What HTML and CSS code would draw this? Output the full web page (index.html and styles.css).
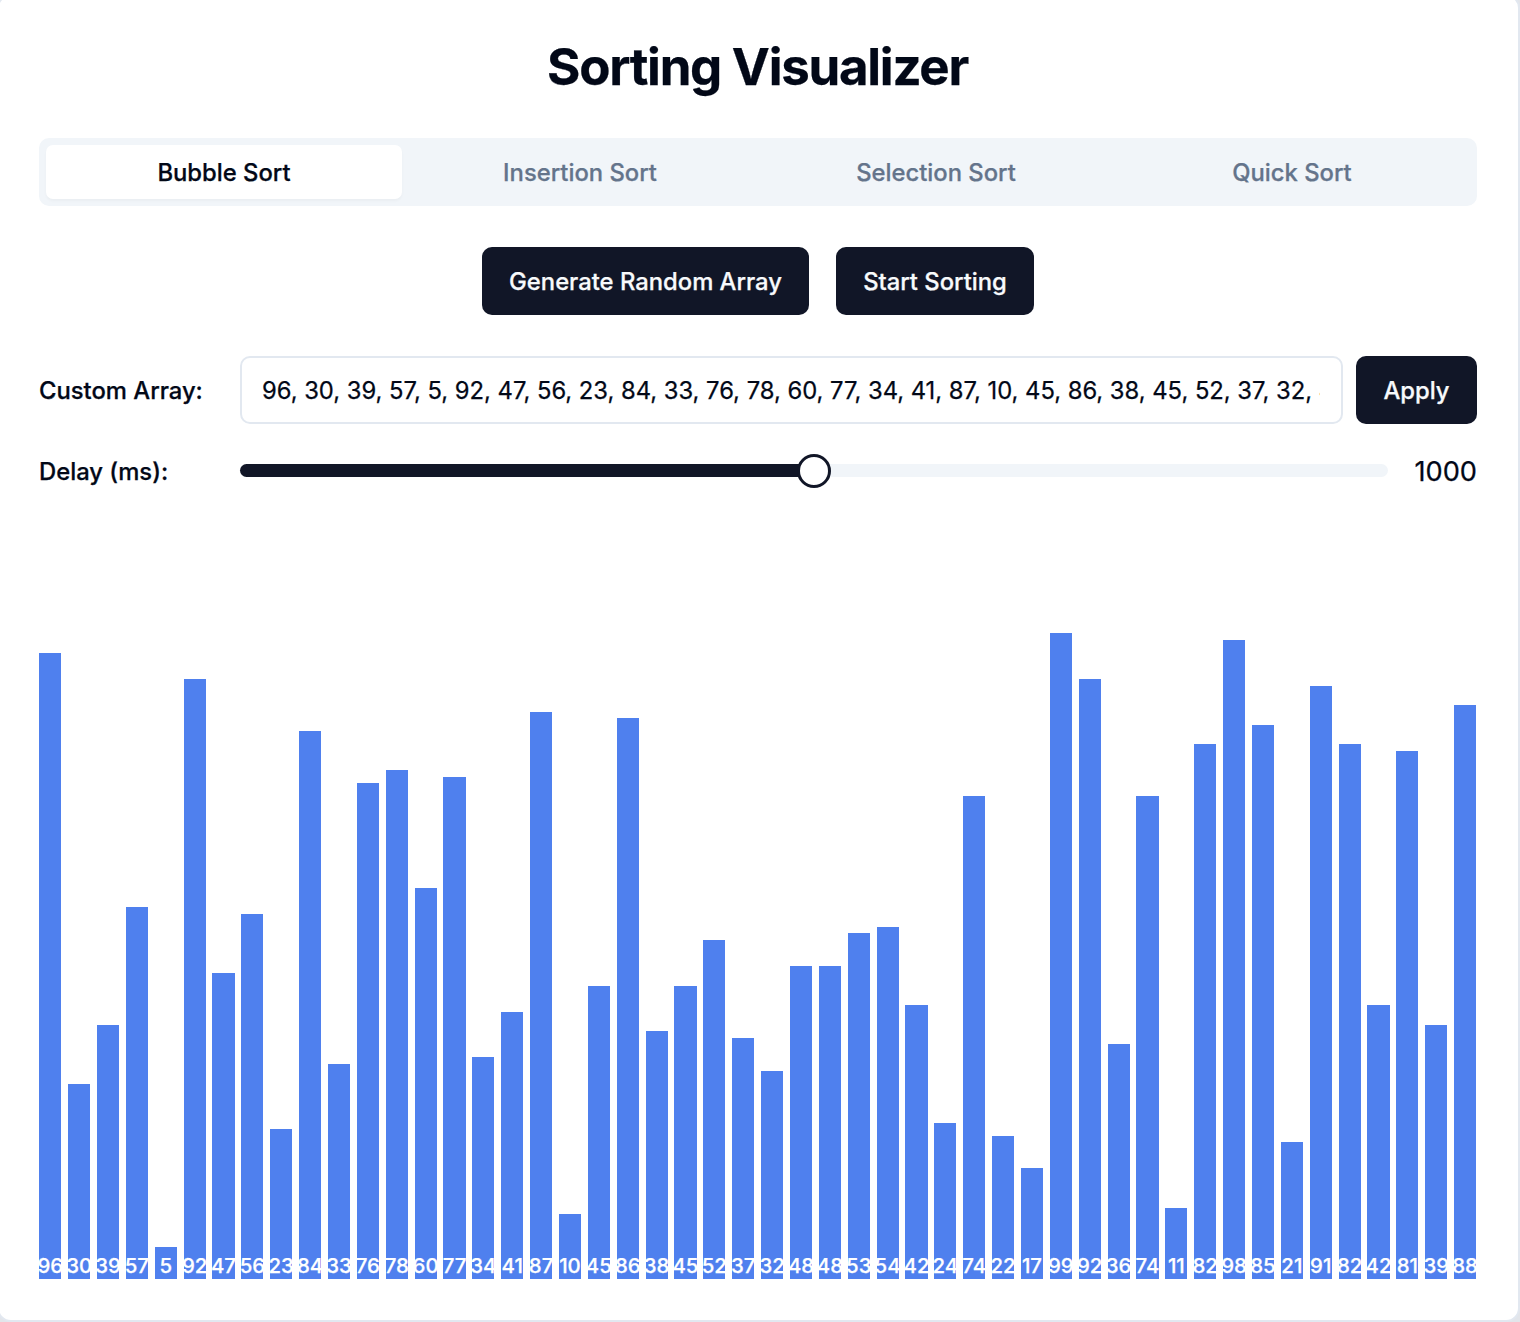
FILE: index.html
```html
<!DOCTYPE html>
<html lang="en">
<head>
<meta charset="utf-8">
<title>Sorting Visualizer</title>
<link rel="stylesheet" href="styles.css">
</head>
<body>
<main class="card">
  <h1 class="title">Sorting Visualizer</h1>
  <div class="tabs" role="tablist">
    <button class="tab tab-active" role="tab">Bubble Sort</button>
    <button class="tab" role="tab">Insertion Sort</button>
    <button class="tab" role="tab">Selection Sort</button>
    <button class="tab" role="tab">Quick Sort</button>
  </div>
  <div class="actions">
    <button class="btn btn-generate">Generate Random Array</button>
    <button class="btn btn-start">Start Sorting</button>
  </div>
  <div class="row row-array">
    <label class="label" for="array">Custom Array:</label>
    <input class="input" id="array" type="text">
    <button class="btn btn-apply">Apply</button>
  </div>
  <div class="row row-delay">
    <span class="label">Delay (ms):</span>
    <div class="slider">
      <div class="range"></div>
      <div class="thumb"></div>
    </div>
    <span class="value">1000</span>
  </div>
  <div class="chart" id="chart"></div>
</main>
<script src="app.js"></script>
</body>
</html>
```
FILE: styles.css
```css
* {
  box-sizing: border-box;
}

body {
  margin: 0;
  height: 1322px;
  overflow: hidden;
  background: #e2e5ea;
  color: #020817;
  font-family: Inter, "Liberation Sans", sans-serif;
  font-optical-sizing: none;
  -webkit-text-stroke: 0.25px currentColor;
}

button,
input {
  margin: 0;
  border: 0;
  color: inherit;
  font: inherit;
}

.card {
  width: 1523px;
  height: 1328px;
  margin: -6px 0 0 -3px;
  padding: 41px 41px 41px 40px;
  display: flex;
  flex-direction: column;
  background: #fff;
  border: 2px solid #e2e8f0;
  border-radius: 14px;
}

.title {
  margin: 0 0 41px;
  padding-right: 1px;
  font-size: 51px;
  line-height: 60px;
  font-weight: 700;
  letter-spacing: -0.025em;
  text-align: center;
}

.tabs {
  height: 68px;
  padding: 7px;
  display: grid;
  grid-template-columns: repeat(4, 1fr);
  border-radius: 10px;
  background: #f1f5f9;
}

.tab {
  border-radius: 7px;
  background: transparent;
  color: #64748b;
  font-size: 23.8px;
  font-weight: 500;
}

.tab-active {
  background: #fff;
  color: #020817;
  box-shadow: 0 2px 3px rgba(0, 0, 0, 0.03);
}

.actions {
  margin-top: 41px;
  display: flex;
  justify-content: center;
  gap: 27px;
}

.btn {
  height: 68px;
  padding: 0;
  border-radius: 10px;
  background: #111627;
  color: #f8fafc;
  font-size: 23.8px;
  font-weight: 500;
  white-space: nowrap;
}

.btn-generate {
  width: 327px;
}

.btn-start {
  width: 198px;
}

.btn-apply {
  width: 121px;
  flex: none;
}

.row {
  display: flex;
  align-items: center;
}

.row-array {
  margin-top: 41px;
  gap: 13px;
}

.label {
  width: 188px;
  flex: none;
  font-size: 23.8px;
  font-weight: 500;
}

.input {
  min-width: 0;
  height: 68px;
  flex: 1;
  padding: 0 21px 0 20px;
  border: 2px solid #e2e8f0;
  border-radius: 10px;
  background: #fff;
  font-size: 23.8px;
  letter-spacing: -0.018px;
}

.row-delay {
  height: 40px;
  margin-top: 27px;
}

.row-delay .label {
  width: 201px;
}

.slider {
  position: relative;
  height: 13px;
  margin-bottom: 1px;
  flex: 1;
  border-radius: 7px;
  background: #f1f5f9;
}

.range {
  width: 50%;
  height: 100%;
  border-radius: 7px 0 0 7px;
  background: #111627;
}

.thumb {
  position: absolute;
  top: 7px;
  left: 50%;
  width: 34px;
  height: 34px;
  border: 3px solid #111627;
  border-radius: 50%;
  background: #fff;
  transform: translate(-50%, -50%);
}

.value {
  width: 89px;
  font-size: 27.2px;
  text-align: right;
}

.chart {
  height: 652.5px;
  margin: auto 0 -0.3px;
  padding: 0 0.7px 0 0.2px;
  display: flex;
  align-items: flex-end;
  gap: 6.8px;
}

.bar {
  min-width: 0;
  flex: 1 1 0;
  display: flex;
  align-items: flex-end;
  justify-content: center;
  background: #4f80ee;
  color: #fff;
  font-size: 20.4px;
  line-height: 27px;
  font-weight: 500;
}
```
FILE: app.js
```javascript
const values = [
  96, 30, 39, 57, 5, 92, 47, 56, 23, 84,
  33, 76, 78, 60, 77, 34, 41, 87, 10, 45,
  86, 38, 45, 52, 37, 32, 48, 48, 53, 54,
  42, 24, 74, 22, 17, 99, 92, 36, 74, 11,
  82, 98, 85, 21, 91, 82, 42, 81, 39, 88,
];

document.getElementById("array").value = values.join(", ");

const chart = document.getElementById("chart");
for (const value of values) {
  const bar = document.createElement("div");
  bar.className = "bar";
  bar.style.height = value + "%";
  bar.textContent = value;
  chart.append(bar);
}
```
